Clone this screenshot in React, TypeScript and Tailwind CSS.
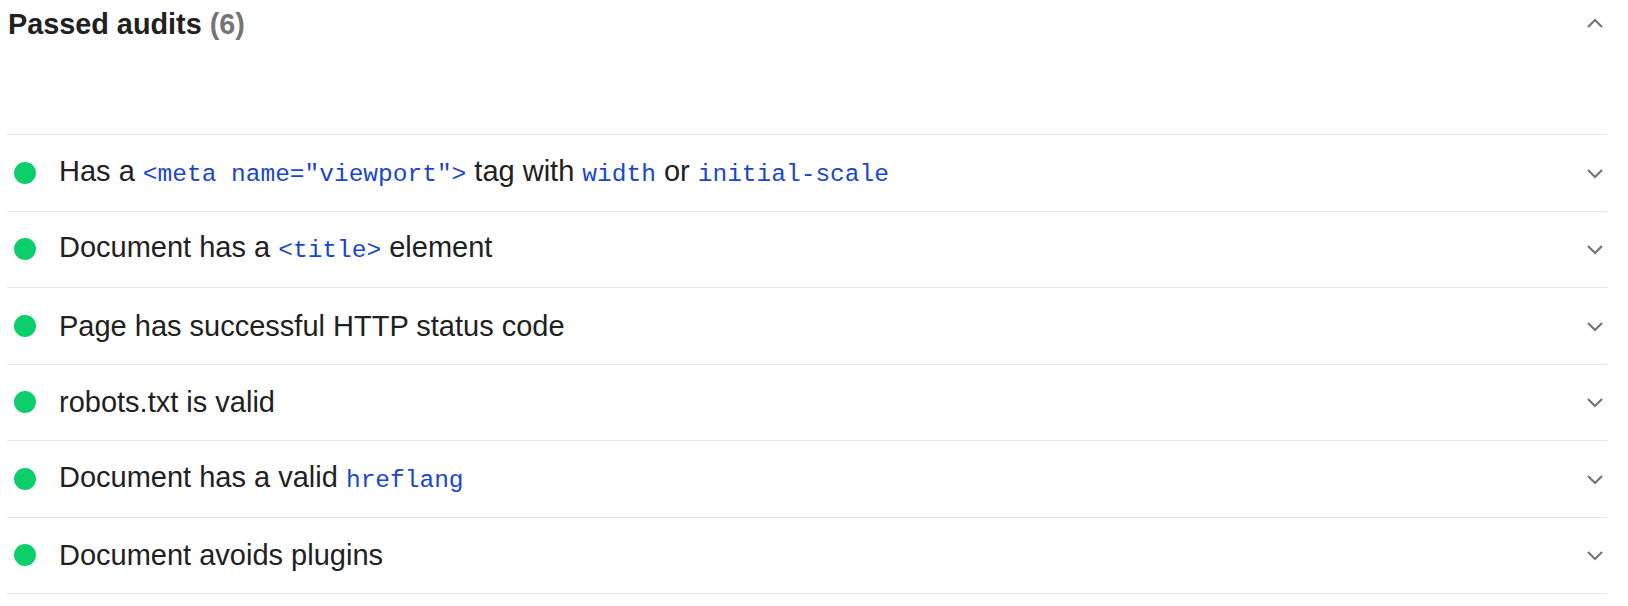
import React from "react";

const Code = ({ children }: { children: React.ReactNode }) => (
  <code className="font-['Liberation_Mono','Courier_New',monospace] text-[24.5px] text-[#1a47c8]">
    {children}
  </code>
);

const ChevronDown = () => (
  <svg width="18" height="12" viewBox="0 0 18 12" fill="none">
    <path d="M2 3l7 7 7-7" stroke="#757575" strokeWidth="2.2" />
  </svg>
);

const ChevronUp = () => (
  <svg width="18" height="12" viewBox="0 0 18 12" fill="none">
    <path d="M2 9l7-7 7 7" stroke="#757575" strokeWidth="2.2" />
  </svg>
);

const rows: React.ReactNode[] = [
  <>
    Has a <Code>&lt;meta name="viewport"&gt;</Code> tag with <Code>width</Code> or{" "}
    <Code>initial-scale</Code>
  </>,
  <>
    Document has a <Code>&lt;title&gt;</Code> element
  </>,
  <>Page has successful HTTP status code</>,
  <>robots.txt is valid</>,
  <>
    Document has a valid <Code>hreflang</Code>
  </>,
  <>Document avoids plugins</>,
];

export default function App() {
  return (
    <div className="w-[1628px] h-[606px] bg-white font-['Liberation_Sans',Arial,sans-serif] text-[#212121]">
      <div className="ml-[7px] w-[1600px]">
        <div className="h-[134px] flex items-start justify-between">
          <div className="pl-[1px] pt-[6px] text-[28.8px] leading-[36px] font-bold">
            Passed audits <span className="text-[#757575]">(6)</span>
          </div>
          <div className="pt-[18px] pr-[3px]">
            <ChevronUp />
          </div>
        </div>
        {rows.map((r, i) => (
          <div
            key={i}
            className={`h-[76.5px] flex items-center border-t border-[#e6e6e6] ${
              i === rows.length - 1 ? "border-b h-[77.5px]" : ""
            }`}
          >
            <div className="ml-[7px] w-[22px] h-[22px] rounded-full bg-[#0cce6b] shrink-0" />
            <div className="ml-[23px] flex-1 text-[29px] leading-[36px] whitespace-nowrap">{r}</div>
            <div className="pr-[3px]">
              <ChevronDown />
            </div>
          </div>
        ))}
      </div>
    </div>
  );
}
